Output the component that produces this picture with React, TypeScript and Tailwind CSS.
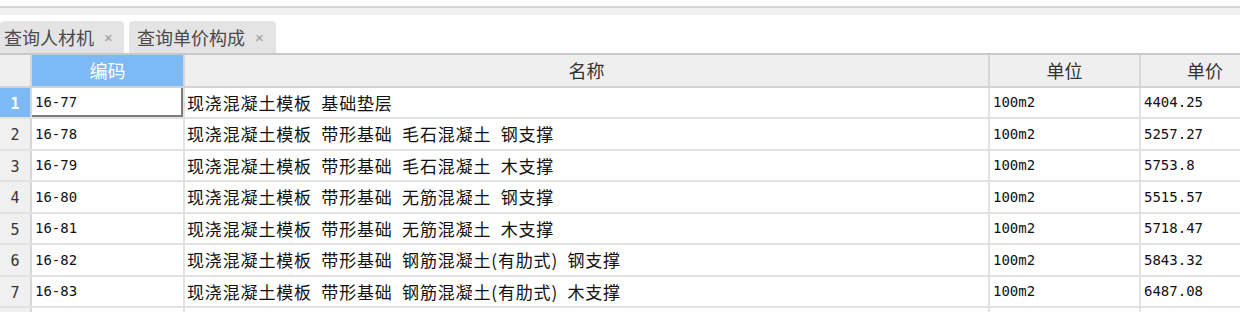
import React from 'react';

const rows = [
  { code: '16-77', name: '现浇混凝土模板\u2002基础垫层', unit: '100m2', price: '4404.25' },
  { code: '16-78', name: '现浇混凝土模板\u2002带形基础\u2002毛石混凝土\u2002钢支撑', unit: '100m2', price: '5257.27' },
  { code: '16-79', name: '现浇混凝土模板\u2002带形基础\u2002毛石混凝土\u2002木支撑', unit: '100m2', price: '5753.8' },
  { code: '16-80', name: '现浇混凝土模板\u2002带形基础\u2002无筋混凝土\u2002钢支撑', unit: '100m2', price: '5515.57' },
  { code: '16-81', name: '现浇混凝土模板\u2002带形基础\u2002无筋混凝土\u2002木支撑', unit: '100m2', price: '5718.47' },
  { code: '16-82', name: '现浇混凝土模板\u2002带形基础\u2002钢筋混凝土(有肋式)\u2002钢支撑', unit: '100m2', price: '5843.32' },
  { code: '16-83', name: '现浇混凝土模板\u2002带形基础\u2002钢筋混凝土(有肋式)\u2002木支撑', unit: '100m2', price: '6487.08' },
];

const cjk = "font-['Noto_Sans_CJK_SC',sans-serif]";
const mono = "font-['DejaVu_Sans_Mono','Noto_Sans_CJK_SC',monospace]";

const Tab: React.FC<{ label: string; width: string; pad: string }> = ({ label, width, pad }) => (
  <div className={`${width} ${pad} h-[32px] bg-[#e4e4e4] rounded-t-[4px] flex items-center gap-[10px]`}>
    <span className={`${cjk} text-[18px] leading-none text-[#4a4a4a]`}>{label}</span>
    <span className="font-['Liberation_Sans',sans-serif] text-[15px] leading-none text-[#9a9a9a]">×</span>
  </div>
);

const App: React.FC = () => {
  return (
    <div className="w-[1240px] h-[312px] overflow-hidden bg-white">
      <div className="h-[6px]" />
      <div className="h-[9px] border-t-2 border-[#d4d4d4] bg-[#f0f0f0]" />
      <div className="h-[6px]" />

      <div className="flex gap-[5px] h-[32px]">
        <Tab label="查询人材机" width="w-[124px]" pad="pl-[4px]" />
        <Tab label="查询单价构成" width="w-[147px]" pad="pl-[8px]" />
      </div>

      <div className="border-t-2 border-[#c8c8c8] w-[1269px]">
        {/* header */}
        <div className={`flex h-[33px] bg-[#efefef] border-b-2 border-[#d2d2d2] ${cjk} text-[18px] text-[#333]`}>
          <div className="w-[32px] border-r-2 border-[#d6d6d6]" />
          <div className="w-[153px] border-r-2 border-[#d6d6d6] bg-[#7db9f5] text-white flex items-center justify-center">编码</div>
          <div className="w-[805px] border-r-2 border-[#d6d6d6] flex items-center justify-center">名称</div>
          <div className="w-[151px] border-r-2 border-[#d6d6d6] flex items-center justify-center">单位</div>
          <div className="w-[128px] flex items-center justify-center">单价</div>
        </div>

        {rows.map((r, i) => (
          <div key={r.code} className={`flex ${i % 2 === 0 ? 'h-[31px]' : 'h-[32px]'} border-b-2 border-[#e2e2e2]`}>
            <div
              className={`w-[32px] border-r-2 border-[#d6d6d6] flex items-center justify-center pt-[3px] ${mono} text-[15px] ${
                i === 0 ? 'bg-[#7db9f5] text-white font-bold' : 'bg-[#f0f0f0] text-[#333]'
              }`}
            >
              {i + 1}
            </div>
            <div
              className={`w-[153px] border-r-2 border-[#e2e2e2] flex items-center px-[3px] ${mono} text-[14px] text-[#111] ${
                i === 0 ? 'shadow-[inset_-2px_-2px_0_#7c7c7c]' : ''
              }`}
            >
              {r.code}
            </div>
            <div className={`w-[805px] border-r-2 border-[#e2e2e2] flex items-center px-[2px] ${cjk} text-[17px] tracking-[0.85px] text-[#111] whitespace-nowrap`}>
              {r.name}
            </div>
            <div className={`w-[151px] border-r-2 border-[#e2e2e2] flex items-center px-[3px] ${mono} text-[14px] text-[#111]`}>
              {r.unit}
            </div>
            <div className={`w-[128px] flex items-center px-[3px] ${mono} text-[14px] text-[#111]`}>
              {r.price}
            </div>
          </div>
        ))}

        <div className="flex h-[31px]">
          <div className="w-[32px] border-r-2 border-[#d6d6d6] bg-[#f0f0f0]" />
          <div className="w-[153px] border-r-2 border-[#e2e2e2]" />
          <div className="w-[805px] border-r-2 border-[#e2e2e2]" />
          <div className="w-[151px] border-r-2 border-[#e2e2e2]" />
          <div className="w-[128px]" />
        </div>
      </div>
    </div>
  );
};

export default App;
